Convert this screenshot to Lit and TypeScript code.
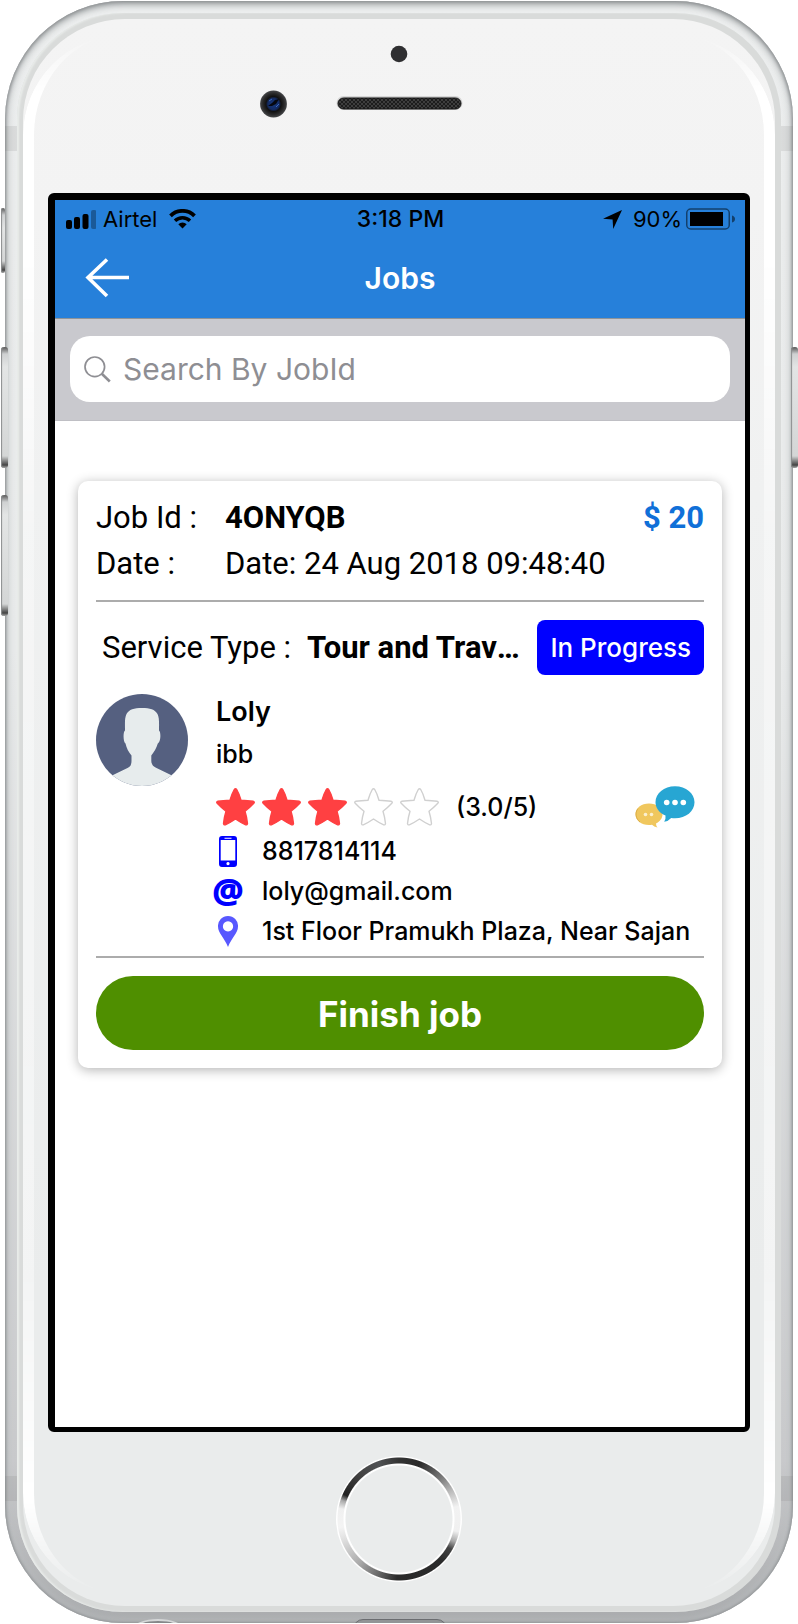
import { LitElement, html, svg, css } from "lit";
import { customElement, property, state } from "lit/decorators.js";
import { classMap } from "lit/directives/class-map.js";

interface Job {
  id: string;
  price: string;
  date: string;
  service: string;
  status: string;
  name: string;
  city: string;
  rating: number;
  phone: string;
  email: string;
  address: string;
}

const JOBS: Job[] = [
  {
    id: "4ONYQB",
    price: "$ 20",
    date: "Date: 24 Aug 2018 09:48:40",
    service: "Tour and Travels",
    status: "In Progress",
    name: "Loly",
    city: "ibb",
    rating: 3,
    phone: "8817814114",
    email: "loly@gmail.com",
    address: "1st Floor Pramukh Plaza, Near Sajan",
  },
];

/** Device casing with side keys, earpiece, display and home button. */
@customElement("phone-frame")
export class PhoneFrame extends LitElement {
  static styles = css`
    :host {
      display: block;
      box-sizing: border-box;
      padding: 1px 5px;
      background: #fff;
    }
    * {
      box-sizing: border-box;
    }
    .body {
      position: relative;
      display: flex;
      min-height: calc(100vh - 2px);
      padding: 12px 12px 11px;
      border-radius: 118px;
      background: linear-gradient(#eceeee, #e9ebeb 40%, #c9cacc 90%, #a9abad);
      box-shadow: inset 0 0 3px 1px #8f9294, inset 0 5px 6px -2px #a2a6a7, inset 0 0 9px 2px #bcbfc1;
    }
    .ring {
      display: flex;
      flex: 1;
      min-width: 0;
      padding: 6px;
      border-radius: 106px;
      background: #d9dbda;
      box-shadow: inset 2px 0 2px #e9ecea;
    }
    .face {
      position: relative;
      display: flex;
      flex: 1;
      flex-direction: column;
      align-items: center;
      min-width: 0;
      padding: 0 25px 24px;
      border-radius: 102px;
      background: linear-gradient(#f4f4f4, #f3f3f3 12%, #f0f1f1 30%, #eaecec 80%);
    }
    .face::before {
      content: "";
      position: absolute;
      inset: 16px 0 13px;
      border: 0 solid #fff;
      border-width: 0 11px;
      border-radius: 100px;
      -webkit-mask-image: linear-gradient(transparent 0, #000 60px, #000 200px, rgba(0, 0, 0, 0.35) 500px, rgba(0, 0, 0, 0.45) 80%, #000 94%, transparent);
      mask-image: linear-gradient(transparent 0, #000 60px, #000 200px, rgba(0, 0, 0, 0.35) 500px, rgba(0, 0, 0, 0.45) 80%, #000 94%, transparent);
      pointer-events: none;
    }
    .sensors {
      display: block;
      flex: none;
    }
    .display {
      display: flex;
      flex: 1;
      flex-direction: column;
      align-self: stretch;
      border: solid #000;
      border-width: 7px 5px 5px 7px;
      border-radius: 6px;
      background: #fff;
    }
    .home {
      width: 126px;
      height: 126px;
      margin-top: 24px;
      padding: 0;
      border: 0;
      border-radius: 50%;
      cursor: pointer;
      background:
        radial-gradient(circle closest-side, #eaecec 53px, #fff 54px, #fff 55px, transparent 56px, transparent 61px, #fff 62px),
        conic-gradient(#333, #2a2a2a 20deg, #777 45deg, #bbb 62deg, #f2f2f2 78deg, #f0f0f0 102deg, #aaa 112deg, #444 120deg, #2b2b2b 135deg, #2a2a2a 182deg, #666 200deg, #aaa 222deg, #ddd 248deg, #f4f4f4 262deg, #f0f0f0 280deg, #aaa 288deg, #222 294deg, #444 320deg, #505254 340deg, #333);
    }
    .key {
      position: absolute;
      width: 7px;
      border-radius: 3px;
      background: linear-gradient(#555 0, #cfd1d2 7px, #e3e5e5 20px, #d4d6d6 calc(100% - 12px), #444 calc(100% - 3px), #aaa);
      box-shadow: inset 1px 0 1px #8b8d8e;
    }
    .mute {
      left: -4px;
      top: 207px;
      width: 4px;
      height: 65px;
    }
    .up {
      left: -4px;
      top: 346px;
      height: 121px;
    }
    .down {
      left: -4px;
      top: 494px;
      height: 121px;
    }
    .power {
      right: -5px;
      top: 346px;
      height: 121px;
    }
    .band {
      position: absolute;
      width: 12px;
      height: 25px;
      background: rgba(110, 112, 112, 0.14);
    }
    .tl { left: 0; top: 125px; }
    .tr { right: 0; top: 125px; }
    .bl { left: 0; bottom: 122px; }
    .br { right: 0; bottom: 122px; }
    .jacks {
      position: absolute;
      left: 128px;
      right: 128px;
      bottom: 0;
      display: flex;
      overflow: hidden;
      height: 4px;
    }
    .jack {
      width: 50px;
      height: 20px;
      border: 2px solid #d5d7d8;
      border-radius: 50%;
      background: #858789;
    }
    .port {
      width: 94px;
      height: 20px;
      margin-left: 170px;
      border: 1px solid #6b6d70;
      border-radius: 10px;
      background: #929496;
    }
  `;

  render() {
    return html`
      <div class="body">
        <span class="key mute"></span>
        <span class="key up"></span>
        <span class="key down"></span>
        <span class="key power"></span>
        <span class="band tl"></span>
        <span class="band tr"></span>
        <span class="band bl"></span>
        <span class="band br"></span>
        <div class="jacks"><span class="jack"></span><span class="port"></span></div>
        <div class="ring">
          <div class="face">
            <svg class="sensors" width="300" height="174" viewBox="0 0 300 174" aria-hidden="true">
              <defs>
                <radialGradient id="lens">
                  <stop offset="0" stop-color="#16387e" />
                  <stop offset="0.42" stop-color="#142b62" />
                  <stop offset="0.56" stop-color="#111" />
                  <stop offset="0.8" stop-color="#2a2a2b" />
                  <stop offset="1" stop-color="#454648" />
                </radialGradient>
                <pattern id="mesh" width="4" height="4" patternUnits="userSpaceOnUse">
                  <rect width="4" height="4" fill="#1d1d1d" />
                  <rect width="2" height="2" fill="#3e3e3e" />
                  <rect x="2" y="2" width="2" height="2" fill="#3e3e3e" />
                </pattern>
              </defs>
              <circle cx="150" cy="35" r="8.3" fill="#2f2f31" />
              <circle cx="24.5" cy="85" r="13.4" fill="url(#lens)" />
              <path d="M19 87l4-3 3-3 4-1-3 5-4 2z" fill="#05070f" />
              <path d="M20 82l3-2M27 88l3-3" stroke="#3a68c0" />
              <rect x="87.500" y="77" width="126" height="14" rx="7" fill="#d6d6d6" />
              <rect x="89" y="79" width="123" height="11" rx="5.500" fill="url(#mesh)" stroke="#161616" />
            </svg>
            <div class="display"><slot></slot></div>
            <button class="home" aria-label="Home"></button>
          </div>
        </div>
      </div>
    `;
  }
}

@customElement("status-bar")
export class StatusBar extends LitElement {
  static styles = css`
    :host {
      display: grid;
      grid-template-columns: 1fr auto 1fr;
      align-items: center;
      height: 38px;
      padding: 0 10px 0 11px;
      font: 22px/38px Inter, "Liberation Sans", sans-serif;
      color: #000;
    }
    .side {
      display: flex;
      align-items: center;
    }
    .carrier {
      margin: 0 12px 0 7px;
    }
    .right {
      justify-content: flex-end;
    }
    .time {
      font-size: 23px;
      font-weight: 500;
    }
    .charge {
      margin: 0 4px 0 11px;
    }
    svg {
      display: block;
      flex: none;
    }
  `;

  render() {
    return html`
      <div class="side">
        <svg width="30" height="19" viewBox="0 0 30 19" aria-hidden="true">
          <rect x="0" y="10" width="6" height="9" rx="2" />
          <rect x="8" y="7" width="6" height="12" rx="2" />
          <rect x="16.500" y="4" width="6" height="15" rx="2" />
          <rect x="25" y="0" width="5.500" height="19" rx="2" opacity="0.3" />
        </svg>
        <span class="carrier">Airtel</span>
        <svg width="27" height="20" viewBox="0 0 27 20" aria-hidden="true">
          <path d="M1.500 6.800A17 17 0 0 1 25.500 6.800" fill="none" stroke="#000" stroke-width="3.800" />
          <path d="M6 11.800A10.600 10.600 0 0 1 21 11.800" fill="none" stroke="#000" stroke-width="3.400" />
          <path d="M9.300 15.300a6 6 0 0 1 8.400 0L13.500 19.500z" />
        </svg>
      </div>
      <span class="time">3:18 PM</span>
      <div class="side right">
        <svg width="19" height="19" viewBox="0 0 19 19" aria-hidden="true">
          <path d="M19 0L10.200 19 9.600 9.400 0 8.800z" />
        </svg>
        <span class="charge">90%</span>
        <svg width="49" height="22" viewBox="0 0 49 22" aria-hidden="true">
          <rect x="0.750" y="1" width="42.500" height="20" rx="4" fill="none" stroke="#000" stroke-width="1.500" opacity="0.5" />
          <rect x="4" y="4" width="33" height="14" />
          <path d="M46 7.500q3 1 3 3.500t-3 3.500z" opacity="0.5" />
        </svg>
      </div>
    `;
  }
}

@customElement("star-rating")
export class StarRating extends LitElement {
  @property({ type: Number }) value = 0;

  static styles = css`
    :host {
      display: flex;
      align-items: center;
      gap: 17px;
    }
    .stars {
      display: flex;
      gap: 7px;
    }
    .star {
      display: block;
      fill: #fff;
      stroke: #d0d0d0;
      stroke-width: 1.4;
      stroke-linejoin: round;
    }
    .on {
      fill: #ff4042;
      stroke: #ff4042;
    }
  `;

  render() {
    return html`
      <div class="stars" role="img" aria-label="${this.value} of 5 stars">
        ${[1, 2, 3, 4, 5].map(
          (n) => html`
            <svg class=${classMap({ star: true, on: n <= this.value })} width="39" height="38" viewBox="0 0 39 38">
              <path d="M18.300 1.500Q19.500 0 20.700 1.500C22.500 4.500 24 8.500 25 12.200C29 12.400 33 12.700 37.300 13.300Q39 14 37.800 15.300C35 18.300 32 21 29 23.300C30.300 27.300 31 31.500 31.500 35.500Q31.300 37.300 29.700 36.800C26 35.200 22.800 33.300 19.500 31C16.200 33.300 13 35.200 9.300 36.800Q7.700 37.300 7.500 35.500C8 31.500 8.700 27.300 10 23.300C7 21 4 18.300 1.200 15.300Q0 14 1.700 13.300C6 12.700 10 12.400 14 12.200C15 8.500 16.500 4.500 18.300 1.500Z" />
            </svg>
          `
        )}
      </div>
      <span>(${this.value.toFixed(1)}/5)</span>
    `;
  }
}

const phoneIcon = svg`
  <svg width="18" height="31" viewBox="0 0 18 31" aria-hidden="true">
    <path fill="#0000ff" fill-rule="evenodd" d="M3 0h12a3 3 0 0 1 3 3v25a3 3 0 0 1-3 3H3a3 3 0 0 1-3-3V3a3 3 0 0 1 3-3zM1.700 4v20.500h14.600V4zM5.500 1.700v1h7v-1zM9 26a1.600 1.600 0 1 0 .01 0z" />
  </svg>`;

const pinIcon = svg`
  <svg width="20" height="31" viewBox="0 0 20 31" aria-hidden="true">
    <path fill="#5858ff" fill-rule="evenodd" d="M10 0a10 10 0 0 1 10 10.500C20 17 13.500 22 10 31 6.500 22 0 17 0 10.500A10 10 0 0 1 10 0zm0 5.300a5.100 5.100 0 1 0 .01 0z" />
  </svg>`;

@customElement("job-card")
export class JobCard extends LitElement {
  @property({ attribute: false }) job!: Job;

  static styles = css`
    :host {
      display: block;
      padding: 14px 18px 18px;
      border-radius: 10px;
      background: #fff;
      box-shadow: 0 2px 12px rgba(0, 0, 0, 0.3);
      font: 500 25px/40px Inter, "Liberation Sans", sans-serif;
      color: #000;
    }
    * {
      box-sizing: border-box;
    }
    .facts {
      display: grid;
      grid-template-columns: 129px 1fr auto;
      margin: 0;
      font: 400 31px/46px Roboto, "Liberation Sans", sans-serif;
    }
    dd {
      margin: 0;
    }
    .id,
    .service {
      font-weight: 700;
    }
    .price {
      font-weight: 700;
      color: #1070d8;
    }
    .date {
      grid-column: 2 / -1;
    }
    hr {
      height: 2px;
      margin: 13px 0 18px;
      border: 0;
      background: #acacac;
    }
    .type {
      display: flex;
      align-items: center;
      padding-left: 6px;
      font: 400 31px/46px Roboto, "Liberation Sans", sans-serif;
    }
    .service {
      flex: 1;
      min-width: 0;
      margin: 0 16px;
      overflow: hidden;
      white-space: nowrap;
      text-overflow: ellipsis;
    }
    .status {
      flex: none;
      height: 55px;
      padding: 0 13px;
      border: 0;
      border-radius: 8px;
      background: #0000ff;
      color: #fff;
      font: 500 26px/55px Inter, "Liberation Sans", sans-serif;
      cursor: pointer;
    }
    .person {
      display: grid;
      grid-template-columns: 92px minmax(0, 1fr);
      gap: 24px;
      margin-top: 19px;
    }
    .avatar {
      display: block;
    }
    .name,
    .city {
      margin: 0 0 6px;
      padding-left: 4px;
      font: 500 25px/36px Inter, "Liberation Sans", sans-serif;
    }
    .name {
      font-size: 27px;
      font-weight: 600;
    }
    .rating {
      display: flex;
      align-items: center;
      justify-content: space-between;
      margin: 15px 9px 4px 4px;
      height: 40px;
    }
    .chat {
      padding: 0;
      border: 0;
      background: none;
      cursor: pointer;
    }
    .chat svg {
      display: block;
    }
    .contact {
      margin: 0;
      padding: 0;
      list-style: none;
    }
    .contact li {
      display: grid;
      grid-template-columns: 32px minmax(0, 1fr);
      align-items: center;
      justify-items: center;
      gap: 18px;
      height: 40px;
    }
    .contact svg {
      display: block;
    }
    .at {
      font: 800 35px/40px "Open Sans", "Liberation Sans", sans-serif;
      color: #0000ff;
    }
    .value {
      justify-self: start;
      max-width: 100%;
      overflow: hidden;
      white-space: nowrap;
      color: inherit;
      text-decoration: none;
    }
    .last {
      margin: 5px 0 18px;
    }
    .finish {
      display: block;
      width: 100%;
      height: 74px;
      border: 0;
      border-radius: 37px;
      background: #4f8f00;
      color: #fff;
      font: 700 35px/74px Inter, "Liberation Sans", sans-serif;
      cursor: pointer;
    }
  `;

  render() {
    const j = this.job;
    return html`
      <dl class="facts">
        <dt>Job Id :</dt>
        <dd class="id">${j.id}</dd>
        <dd class="price">${j.price}</dd>
        <dt>Date :</dt>
        <dd class="date">${j.date}</dd>
      </dl>
      <hr />
      <div class="type">
        <span>Service Type :</span>
        <span class="service">${j.service}</span>
        <button class="status">${j.status}</button>
      </div>
      <div class="person">
        <svg class="avatar" width="92" height="92" viewBox="0 0 92 92" role="img" aria-label="Profile picture">
          <defs><clipPath id="disc"><circle cx="46" cy="46" r="46" /></clipPath></defs>
          <g clip-path="url(#disc)">
            <rect width="92" height="92" fill="#556080" />
            <path fill="#e7eced" d="M46 14C54 14 59 15.500 61.500 20C63.500 24 63 30 63 36.500C65 37.500 65 48 61.800 49.500C60.500 54 58 58 55.300 61.500V67C55.500 71 57.500 72.500 60 73.800L76 81.500V92H16V81.500L32 73.800C34.500 72.500 35.300 71 35.500 67V61.500C32.500 58 30.500 54 29.500 49.500C27 48 27 37.500 29 36.500C29 30 28.500 24 30.500 20C33 15.500 38 14 46 14Z" />
          </g>
        </svg>
        <div>
          <h2 class="name">${j.name}</h2>
          <p class="city">${j.city}</p>
          <div class="rating">
            <star-rating .value=${j.rating}></star-rating>
            <button class="chat" aria-label="Chat">
              <svg width="60" height="42" viewBox="0 0 60 42" aria-hidden="true">
                <path fill="#f0c75e" d="M14 17.500c7.500 0 13.500 4.500 13.500 10.800 0 4-2.500 7.200-6.500 9.200q0 2.500 1.500 4-3.500-.5-5.500-2.800-1.500.3-3 .3C6.300 39 .5 34.500.5 28.300S6.300 17.500 14 17.500z" />
                <path fill="none" stroke="#dcae48" d="M3 22.500C-.5 27 1 33 5 36" />
                <circle cx="10.500" cy="28.500" r="1.800" fill="#fbf0d0" /><circle cx="16.500" cy="28.500" r="1.800" fill="#fbf0d0" />
                <path fill="#27a6d3" d="M40 .3c11 0 19.500 7 19.500 16s-8.500 16-19.500 16q-2 0-3.800-.4-3 3.300-7 3.800 1.800-2.500 1.300-6.200C24.300 27 20.500 22 20.500 16.300 20.500 7.300 29 .3 40 .3z" />
                <circle cx="31.700" cy="16.500" r="2.800" fill="#fff" /><circle cx="40" cy="16.500" r="2.800" fill="#fff" /><circle cx="48.300" cy="16.500" r="2.800" fill="#fff" />
              </svg>
            </button>
          </div>
          <ul class="contact">
            <li>${phoneIcon}<a class="value" href="tel:${j.phone}">${j.phone}</a></li>
            <li><span class="at" aria-hidden="true">@</span><a class="value" href="mailto:${j.email}">${j.email}</a></li>
            <li>${pinIcon}<span class="value">${j.address}</span></li>
          </ul>
        </div>
      </div>
      <hr class="last" />
      <button class="finish">Finish job</button>
    `;
  }
}

@customElement("app-root")
export class AppRoot extends LitElement {
  @state() private query = "";

  static styles = css`
    :host {
      display: block;
    }
    * {
      box-sizing: border-box;
    }
    .top {
      border-bottom: 1px solid #8f9498;
      background: #2680da;
    }
    .nav {
      display: grid;
      grid-template-columns: 44px 1fr 44px;
      align-items: center;
      height: 80px;
      padding: 0 30px;
    }
    .back {
      padding: 0;
      border: 0;
      background: none;
      cursor: pointer;
    }
    .back svg {
      display: block;
    }
    .title {
      margin: 0;
      text-align: center;
      font: 600 30px/80px Inter, "Liberation Sans", sans-serif;
      color: #fff;
    }
    .search {
      padding: 17px 15px 18px;
      border-bottom: 1px solid #bfbfc4;
      background: #c9c9ce;
    }
    .field {
      display: flex;
      align-items: center;
      gap: 12px;
      height: 66px;
      padding: 0 14px;
      border-radius: 20px;
      background: #fff;
    }
    .field svg {
      flex: none;
    }
    .input {
      flex: 1;
      min-width: 0;
      height: 60px;
      padding: 0;
      border: 0;
      outline: 0;
      background: none;
      font: 400 30px/60px Inter, "Liberation Sans", sans-serif;
      color: #000;
    }
    .input::placeholder {
      color: #8e8e93;
      opacity: 1;
    }
    .list {
      display: grid;
      gap: 24px;
      padding: 60px 23px;
    }
  `;

  private onSearch(e: Event) {
    this.query = (e.target as HTMLInputElement).value;
  }

  render() {
    const jobs = JOBS.filter((j) => j.id.toLowerCase().includes(this.query.toLowerCase()));
    return html`
      <phone-frame>
        <header class="top">
          <status-bar></status-bar>
          <div class="nav">
            <button class="back" aria-label="Back">
              <svg width="44" height="40" viewBox="0 0 44 40" fill="none" stroke="#fff" stroke-width="3.600" aria-hidden="true">
                <path d="M44 19.500H3M22 1.500L3 19.500 22 38" />
              </svg>
            </button>
            <h1 class="title">Jobs</h1>
          </div>
        </header>
        <div class="search">
          <label class="field">
            <svg width="27" height="27" viewBox="0 0 27 27" fill="none" stroke="#8e8e93" aria-hidden="true">
              <circle cx="10.800" cy="10.800" r="9.800" stroke-width="1.700" />
              <path d="M17.800 17.800l8 7.700" stroke-width="2.600" />
            </svg>
            <input class="input" type="search" placeholder="Search By JobId" aria-label="Search By JobId" .value=${this.query} @input=${this.onSearch} />
          </label>
        </div>
        <main class="list">
          ${jobs.map((j) => html`<job-card .job=${j}></job-card>`)}
        </main>
      </phone-frame>
    `;
  }
}
